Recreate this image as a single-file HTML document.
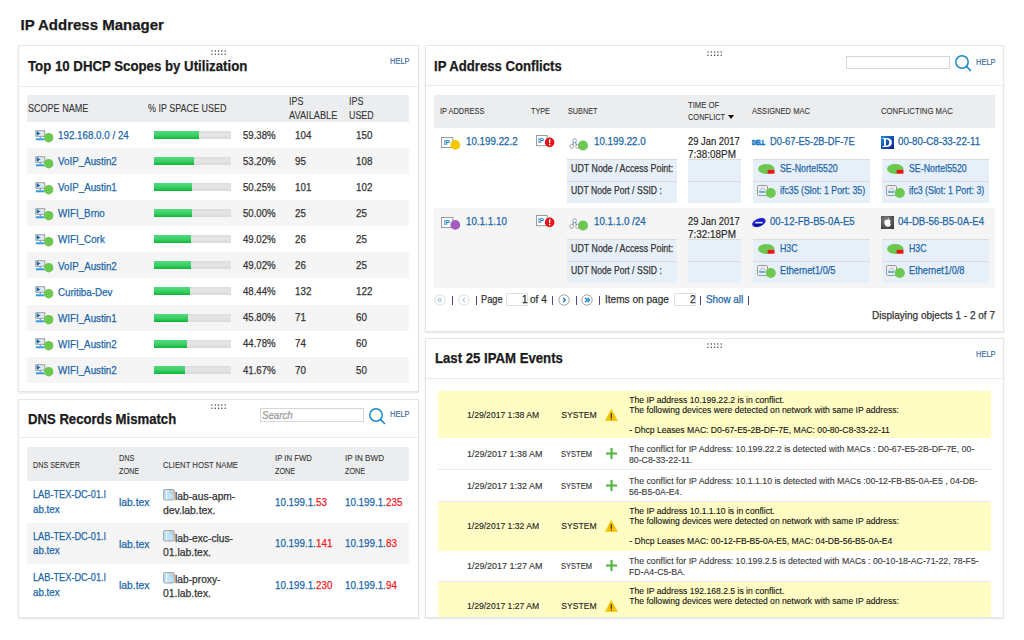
<!DOCTYPE html>
<html><head><meta charset="utf-8"><title>IP Address Manager</title><style>
html,body{margin:0;padding:0;background:#fff;width:1024px;height:640px;overflow:hidden;position:relative}
body{font-family:"Liberation Sans",sans-serif}
.t{position:absolute;white-space:nowrap;transform-origin:0 0;-webkit-text-stroke:0.25px currentColor}
.r{position:absolute;box-sizing:border-box}
.panel{background:#fff;border:1px solid #e6e6e6;box-shadow:0 1px 2px rgba(0,0,0,0.10)}
svg.r{overflow:visible}
</style></head><body>
<div class="t" style="left:20.50px;top:17.45px;font-size:15.00px;line-height:15.00px;color:#1b1b1b;font-weight:bold;">IP Address Manager</div>
<div class="r panel" style="left:18.00px;top:45.00px;width:401.00px;height:347.00px;"></div>
<div class="t" style="left:27.50px;top:58.73px;font-size:14.20px;line-height:14.20px;color:#1b1b1b;font-weight:bold;transform:scaleX(0.9325);">Top 10 DHCP Scopes by Utilization</div>
<svg class="r" style="left:211.10px;top:50.40px" width="16" height="6" viewBox="0 0 16 6"><circle cx="1.00" cy="1.00" r="0.7" fill="#333"/><circle cx="1.00" cy="4.20" r="0.7" fill="#333"/><circle cx="4.30" cy="1.00" r="0.7" fill="#333"/><circle cx="4.30" cy="4.20" r="0.7" fill="#333"/><circle cx="7.60" cy="1.00" r="0.7" fill="#333"/><circle cx="7.60" cy="4.20" r="0.7" fill="#333"/><circle cx="10.90" cy="1.00" r="0.7" fill="#333"/><circle cx="10.90" cy="4.20" r="0.7" fill="#333"/><circle cx="14.20" cy="1.00" r="0.7" fill="#333"/><circle cx="14.20" cy="4.20" r="0.7" fill="#333"/></svg>
<div class="t" style="left:389.80px;top:58.13px;font-size:8.20px;line-height:8.20px;color:#2f6593;transform:scaleX(0.9150);-webkit-text-stroke:0.1px currentColor;">HELP</div>
<div class="r" style="left:19.00px;top:85.50px;width:399.00px;height:1.00px;background:#e9e9e9;"></div>
<div class="r" style="left:27.00px;top:94.80px;width:382.30px;height:27.20px;background:#ebedef;"></div>
<div class="t" style="left:27.60px;top:102.59px;font-size:10.60px;line-height:10.60px;color:#333333;transform:scaleX(0.8531);-webkit-text-stroke:0.08px currentColor;">SCOPE NAME</div>
<div class="t" style="left:147.70px;top:102.59px;font-size:10.60px;line-height:10.60px;color:#333333;transform:scaleX(0.8459);-webkit-text-stroke:0.08px currentColor;">% IP SPACE USED</div>
<div class="t" style="left:289.00px;top:95.99px;font-size:10.60px;line-height:10.60px;color:#333333;transform:scaleX(0.8400);-webkit-text-stroke:0.08px currentColor;">IPS</div>
<div class="t" style="left:289.00px;top:109.59px;font-size:10.60px;line-height:10.60px;color:#333333;transform:scaleX(0.8707);-webkit-text-stroke:0.08px currentColor;">AVAILABLE</div>
<div class="t" style="left:349.20px;top:95.99px;font-size:10.60px;line-height:10.60px;color:#333333;transform:scaleX(0.8400);-webkit-text-stroke:0.08px currentColor;">IPS</div>
<div class="t" style="left:349.20px;top:109.59px;font-size:10.60px;line-height:10.60px;color:#333333;transform:scaleX(0.8400);-webkit-text-stroke:0.08px currentColor;">USED</div>
<svg class="r" style="left:35.00px;top:129.80px" width="11" height="11" viewBox="0 0 11 11"><rect x="0.8" y="0.7" width="9" height="5.6" fill="#dfe6ee" stroke="#8a8f96" stroke-width="0.8"/><rect x="1.6" y="1.6" width="2.2" height="3.6" fill="#1f6aa8"/><rect x="3.6" y="3" width="1.6" height="1" fill="#1f6aa8"/><rect x="4.6" y="6.3" width="1.4" height="2" fill="#5aa6de"/><rect x="0.8" y="8.3" width="8.6" height="2" fill="#3c9ad9"/></svg>
<svg class="r" style="left:42.90px;top:132.10px" width="11.4" height="11.4" viewBox="0 0 11.4 11.4"><circle cx="5.7" cy="5.7" r="4.7" fill="#6cc84e"/></svg>
<div class="t" style="left:57.80px;top:130.35px;font-size:11.00px;line-height:11.00px;color:#1b66a8;transform:scaleX(0.8900);">192.168.0.0 / 24</div>
<div class="r" style="left:154.00px;top:131.30px;width:77.00px;height:8.00px;background:linear-gradient(#dcdcdc,#e6e6e6 40%,#dadada);"></div>
<div class="r" style="left:154.00px;top:131.30px;width:44.72px;height:8.00px;background:linear-gradient(#52da7e,#3fd06a 50%,#0cb632);"></div>
<div class="t" style="left:242.60px;top:130.25px;font-size:11.00px;line-height:11.00px;color:#333333;transform:scaleX(0.8738);">59.38%</div>
<div class="t" style="left:294.60px;top:130.25px;font-size:11.00px;line-height:11.00px;color:#333333;transform:scaleX(0.8900);">104</div>
<div class="t" style="left:355.70px;top:130.25px;font-size:11.00px;line-height:11.00px;color:#333333;transform:scaleX(0.8900);">150</div>
<div class="r" style="left:27.00px;top:148.33px;width:382.30px;height:26.00px;background:#f5f5f5;"></div>
<svg class="r" style="left:35.00px;top:155.83px" width="11" height="11" viewBox="0 0 11 11"><rect x="0.8" y="0.7" width="9" height="5.6" fill="#dfe6ee" stroke="#8a8f96" stroke-width="0.8"/><rect x="1.6" y="1.6" width="2.2" height="3.6" fill="#1f6aa8"/><rect x="3.6" y="3" width="1.6" height="1" fill="#1f6aa8"/><rect x="4.6" y="6.3" width="1.4" height="2" fill="#5aa6de"/><rect x="0.8" y="8.3" width="8.6" height="2" fill="#3c9ad9"/></svg>
<svg class="r" style="left:42.90px;top:158.13px" width="11.4" height="11.4" viewBox="0 0 11.4 11.4"><circle cx="5.7" cy="5.7" r="4.7" fill="#6cc84e"/></svg>
<div class="t" style="left:57.80px;top:156.38px;font-size:11.00px;line-height:11.00px;color:#1b66a8;transform:scaleX(0.8900);">VoIP_Austin2</div>
<div class="r" style="left:154.00px;top:157.33px;width:77.00px;height:8.00px;background:linear-gradient(#dcdcdc,#e6e6e6 40%,#dadada);"></div>
<div class="r" style="left:154.00px;top:157.33px;width:39.96px;height:8.00px;background:linear-gradient(#52da7e,#3fd06a 50%,#0cb632);"></div>
<div class="t" style="left:242.60px;top:156.28px;font-size:11.00px;line-height:11.00px;color:#333333;transform:scaleX(0.8738);">53.20%</div>
<div class="t" style="left:294.60px;top:156.28px;font-size:11.00px;line-height:11.00px;color:#333333;transform:scaleX(0.8900);">95</div>
<div class="t" style="left:355.70px;top:156.28px;font-size:11.00px;line-height:11.00px;color:#333333;transform:scaleX(0.8900);">108</div>
<svg class="r" style="left:35.00px;top:181.86px" width="11" height="11" viewBox="0 0 11 11"><rect x="0.8" y="0.7" width="9" height="5.6" fill="#dfe6ee" stroke="#8a8f96" stroke-width="0.8"/><rect x="1.6" y="1.6" width="2.2" height="3.6" fill="#1f6aa8"/><rect x="3.6" y="3" width="1.6" height="1" fill="#1f6aa8"/><rect x="4.6" y="6.3" width="1.4" height="2" fill="#5aa6de"/><rect x="0.8" y="8.3" width="8.6" height="2" fill="#3c9ad9"/></svg>
<svg class="r" style="left:42.90px;top:184.16px" width="11.4" height="11.4" viewBox="0 0 11.4 11.4"><circle cx="5.7" cy="5.7" r="4.7" fill="#6cc84e"/></svg>
<div class="t" style="left:57.80px;top:182.41px;font-size:11.00px;line-height:11.00px;color:#1b66a8;transform:scaleX(0.8900);">VoIP_Austin1</div>
<div class="r" style="left:154.00px;top:183.36px;width:77.00px;height:8.00px;background:linear-gradient(#dcdcdc,#e6e6e6 40%,#dadada);"></div>
<div class="r" style="left:154.00px;top:183.36px;width:37.69px;height:8.00px;background:linear-gradient(#52da7e,#3fd06a 50%,#0cb632);"></div>
<div class="t" style="left:242.60px;top:182.31px;font-size:11.00px;line-height:11.00px;color:#333333;transform:scaleX(0.8738);">50.25%</div>
<div class="t" style="left:294.60px;top:182.31px;font-size:11.00px;line-height:11.00px;color:#333333;transform:scaleX(0.8900);">101</div>
<div class="t" style="left:355.70px;top:182.31px;font-size:11.00px;line-height:11.00px;color:#333333;transform:scaleX(0.8900);">102</div>
<div class="r" style="left:27.00px;top:200.39px;width:382.30px;height:26.00px;background:#f5f5f5;"></div>
<svg class="r" style="left:35.00px;top:207.89px" width="11" height="11" viewBox="0 0 11 11"><rect x="0.8" y="0.7" width="9" height="5.6" fill="#dfe6ee" stroke="#8a8f96" stroke-width="0.8"/><rect x="1.6" y="1.6" width="2.2" height="3.6" fill="#1f6aa8"/><rect x="3.6" y="3" width="1.6" height="1" fill="#1f6aa8"/><rect x="4.6" y="6.3" width="1.4" height="2" fill="#5aa6de"/><rect x="0.8" y="8.3" width="8.6" height="2" fill="#3c9ad9"/></svg>
<svg class="r" style="left:42.90px;top:210.19px" width="11.4" height="11.4" viewBox="0 0 11.4 11.4"><circle cx="5.7" cy="5.7" r="4.7" fill="#6cc84e"/></svg>
<div class="t" style="left:57.80px;top:208.44px;font-size:11.00px;line-height:11.00px;color:#1b66a8;transform:scaleX(0.8900);">WIFI_Brno</div>
<div class="r" style="left:154.00px;top:209.39px;width:77.00px;height:8.00px;background:linear-gradient(#dcdcdc,#e6e6e6 40%,#dadada);"></div>
<div class="r" style="left:154.00px;top:209.39px;width:37.50px;height:8.00px;background:linear-gradient(#52da7e,#3fd06a 50%,#0cb632);"></div>
<div class="t" style="left:242.60px;top:208.34px;font-size:11.00px;line-height:11.00px;color:#333333;transform:scaleX(0.8738);">50.00%</div>
<div class="t" style="left:294.60px;top:208.34px;font-size:11.00px;line-height:11.00px;color:#333333;transform:scaleX(0.8900);">25</div>
<div class="t" style="left:355.70px;top:208.34px;font-size:11.00px;line-height:11.00px;color:#333333;transform:scaleX(0.8900);">25</div>
<svg class="r" style="left:35.00px;top:233.92px" width="11" height="11" viewBox="0 0 11 11"><rect x="0.8" y="0.7" width="9" height="5.6" fill="#dfe6ee" stroke="#8a8f96" stroke-width="0.8"/><rect x="1.6" y="1.6" width="2.2" height="3.6" fill="#1f6aa8"/><rect x="3.6" y="3" width="1.6" height="1" fill="#1f6aa8"/><rect x="4.6" y="6.3" width="1.4" height="2" fill="#5aa6de"/><rect x="0.8" y="8.3" width="8.6" height="2" fill="#3c9ad9"/></svg>
<svg class="r" style="left:42.90px;top:236.22px" width="11.4" height="11.4" viewBox="0 0 11.4 11.4"><circle cx="5.7" cy="5.7" r="4.7" fill="#6cc84e"/></svg>
<div class="t" style="left:57.80px;top:234.47px;font-size:11.00px;line-height:11.00px;color:#1b66a8;transform:scaleX(0.8900);">WIFI_Cork</div>
<div class="r" style="left:154.00px;top:235.42px;width:77.00px;height:8.00px;background:linear-gradient(#dcdcdc,#e6e6e6 40%,#dadada);"></div>
<div class="r" style="left:154.00px;top:235.42px;width:36.75px;height:8.00px;background:linear-gradient(#52da7e,#3fd06a 50%,#0cb632);"></div>
<div class="t" style="left:242.60px;top:234.37px;font-size:11.00px;line-height:11.00px;color:#333333;transform:scaleX(0.8738);">49.02%</div>
<div class="t" style="left:294.60px;top:234.37px;font-size:11.00px;line-height:11.00px;color:#333333;transform:scaleX(0.8900);">26</div>
<div class="t" style="left:355.70px;top:234.37px;font-size:11.00px;line-height:11.00px;color:#333333;transform:scaleX(0.8900);">25</div>
<div class="r" style="left:27.00px;top:252.45px;width:382.30px;height:26.00px;background:#f5f5f5;"></div>
<svg class="r" style="left:35.00px;top:259.95px" width="11" height="11" viewBox="0 0 11 11"><rect x="0.8" y="0.7" width="9" height="5.6" fill="#dfe6ee" stroke="#8a8f96" stroke-width="0.8"/><rect x="1.6" y="1.6" width="2.2" height="3.6" fill="#1f6aa8"/><rect x="3.6" y="3" width="1.6" height="1" fill="#1f6aa8"/><rect x="4.6" y="6.3" width="1.4" height="2" fill="#5aa6de"/><rect x="0.8" y="8.3" width="8.6" height="2" fill="#3c9ad9"/></svg>
<svg class="r" style="left:42.90px;top:262.25px" width="11.4" height="11.4" viewBox="0 0 11.4 11.4"><circle cx="5.7" cy="5.7" r="4.7" fill="#6cc84e"/></svg>
<div class="t" style="left:57.80px;top:260.50px;font-size:11.00px;line-height:11.00px;color:#1b66a8;transform:scaleX(0.8900);">VoIP_Austin2</div>
<div class="r" style="left:154.00px;top:261.45px;width:77.00px;height:8.00px;background:linear-gradient(#dcdcdc,#e6e6e6 40%,#dadada);"></div>
<div class="r" style="left:154.00px;top:261.45px;width:36.75px;height:8.00px;background:linear-gradient(#52da7e,#3fd06a 50%,#0cb632);"></div>
<div class="t" style="left:242.60px;top:260.40px;font-size:11.00px;line-height:11.00px;color:#333333;transform:scaleX(0.8738);">49.02%</div>
<div class="t" style="left:294.60px;top:260.40px;font-size:11.00px;line-height:11.00px;color:#333333;transform:scaleX(0.8900);">26</div>
<div class="t" style="left:355.70px;top:260.40px;font-size:11.00px;line-height:11.00px;color:#333333;transform:scaleX(0.8900);">25</div>
<svg class="r" style="left:35.00px;top:285.98px" width="11" height="11" viewBox="0 0 11 11"><rect x="0.8" y="0.7" width="9" height="5.6" fill="#dfe6ee" stroke="#8a8f96" stroke-width="0.8"/><rect x="1.6" y="1.6" width="2.2" height="3.6" fill="#1f6aa8"/><rect x="3.6" y="3" width="1.6" height="1" fill="#1f6aa8"/><rect x="4.6" y="6.3" width="1.4" height="2" fill="#5aa6de"/><rect x="0.8" y="8.3" width="8.6" height="2" fill="#3c9ad9"/></svg>
<svg class="r" style="left:42.90px;top:288.28px" width="11.4" height="11.4" viewBox="0 0 11.4 11.4"><circle cx="5.7" cy="5.7" r="4.7" fill="#6cc84e"/></svg>
<div class="t" style="left:57.80px;top:286.53px;font-size:11.00px;line-height:11.00px;color:#1b66a8;transform:scaleX(0.8900);">Curitiba-Dev</div>
<div class="r" style="left:154.00px;top:287.48px;width:77.00px;height:8.00px;background:linear-gradient(#dcdcdc,#e6e6e6 40%,#dadada);"></div>
<div class="r" style="left:154.00px;top:287.48px;width:36.30px;height:8.00px;background:linear-gradient(#52da7e,#3fd06a 50%,#0cb632);"></div>
<div class="t" style="left:242.60px;top:286.43px;font-size:11.00px;line-height:11.00px;color:#333333;transform:scaleX(0.8738);">48.44%</div>
<div class="t" style="left:294.60px;top:286.43px;font-size:11.00px;line-height:11.00px;color:#333333;transform:scaleX(0.8900);">132</div>
<div class="t" style="left:355.70px;top:286.43px;font-size:11.00px;line-height:11.00px;color:#333333;transform:scaleX(0.8900);">122</div>
<div class="r" style="left:27.00px;top:304.51px;width:382.30px;height:26.00px;background:#f5f5f5;"></div>
<svg class="r" style="left:35.00px;top:312.01px" width="11" height="11" viewBox="0 0 11 11"><rect x="0.8" y="0.7" width="9" height="5.6" fill="#dfe6ee" stroke="#8a8f96" stroke-width="0.8"/><rect x="1.6" y="1.6" width="2.2" height="3.6" fill="#1f6aa8"/><rect x="3.6" y="3" width="1.6" height="1" fill="#1f6aa8"/><rect x="4.6" y="6.3" width="1.4" height="2" fill="#5aa6de"/><rect x="0.8" y="8.3" width="8.6" height="2" fill="#3c9ad9"/></svg>
<svg class="r" style="left:42.90px;top:314.31px" width="11.4" height="11.4" viewBox="0 0 11.4 11.4"><circle cx="5.7" cy="5.7" r="4.7" fill="#6cc84e"/></svg>
<div class="t" style="left:57.80px;top:312.56px;font-size:11.00px;line-height:11.00px;color:#1b66a8;transform:scaleX(0.8900);">WIFI_Austin1</div>
<div class="r" style="left:154.00px;top:313.51px;width:77.00px;height:8.00px;background:linear-gradient(#dcdcdc,#e6e6e6 40%,#dadada);"></div>
<div class="r" style="left:154.00px;top:313.51px;width:34.27px;height:8.00px;background:linear-gradient(#52da7e,#3fd06a 50%,#0cb632);"></div>
<div class="t" style="left:242.60px;top:312.46px;font-size:11.00px;line-height:11.00px;color:#333333;transform:scaleX(0.8738);">45.80%</div>
<div class="t" style="left:294.60px;top:312.46px;font-size:11.00px;line-height:11.00px;color:#333333;transform:scaleX(0.8900);">71</div>
<div class="t" style="left:355.70px;top:312.46px;font-size:11.00px;line-height:11.00px;color:#333333;transform:scaleX(0.8900);">60</div>
<svg class="r" style="left:35.00px;top:338.04px" width="11" height="11" viewBox="0 0 11 11"><rect x="0.8" y="0.7" width="9" height="5.6" fill="#dfe6ee" stroke="#8a8f96" stroke-width="0.8"/><rect x="1.6" y="1.6" width="2.2" height="3.6" fill="#1f6aa8"/><rect x="3.6" y="3" width="1.6" height="1" fill="#1f6aa8"/><rect x="4.6" y="6.3" width="1.4" height="2" fill="#5aa6de"/><rect x="0.8" y="8.3" width="8.6" height="2" fill="#3c9ad9"/></svg>
<svg class="r" style="left:42.90px;top:340.34px" width="11.4" height="11.4" viewBox="0 0 11.4 11.4"><circle cx="5.7" cy="5.7" r="4.7" fill="#6cc84e"/></svg>
<div class="t" style="left:57.80px;top:338.59px;font-size:11.00px;line-height:11.00px;color:#1b66a8;transform:scaleX(0.8900);">WIFI_Austin2</div>
<div class="r" style="left:154.00px;top:339.54px;width:77.00px;height:8.00px;background:linear-gradient(#dcdcdc,#e6e6e6 40%,#dadada);"></div>
<div class="r" style="left:154.00px;top:339.54px;width:33.48px;height:8.00px;background:linear-gradient(#52da7e,#3fd06a 50%,#0cb632);"></div>
<div class="t" style="left:242.60px;top:338.49px;font-size:11.00px;line-height:11.00px;color:#333333;transform:scaleX(0.8738);">44.78%</div>
<div class="t" style="left:294.60px;top:338.49px;font-size:11.00px;line-height:11.00px;color:#333333;transform:scaleX(0.8900);">74</div>
<div class="t" style="left:355.70px;top:338.49px;font-size:11.00px;line-height:11.00px;color:#333333;transform:scaleX(0.8900);">60</div>
<div class="r" style="left:27.00px;top:356.57px;width:382.30px;height:26.00px;background:#f5f5f5;"></div>
<svg class="r" style="left:35.00px;top:364.07px" width="11" height="11" viewBox="0 0 11 11"><rect x="0.8" y="0.7" width="9" height="5.6" fill="#dfe6ee" stroke="#8a8f96" stroke-width="0.8"/><rect x="1.6" y="1.6" width="2.2" height="3.6" fill="#1f6aa8"/><rect x="3.6" y="3" width="1.6" height="1" fill="#1f6aa8"/><rect x="4.6" y="6.3" width="1.4" height="2" fill="#5aa6de"/><rect x="0.8" y="8.3" width="8.6" height="2" fill="#3c9ad9"/></svg>
<svg class="r" style="left:42.90px;top:366.37px" width="11.4" height="11.4" viewBox="0 0 11.4 11.4"><circle cx="5.7" cy="5.7" r="4.7" fill="#6cc84e"/></svg>
<div class="t" style="left:57.80px;top:364.62px;font-size:11.00px;line-height:11.00px;color:#1b66a8;transform:scaleX(0.8900);">WIFI_Austin2</div>
<div class="r" style="left:154.00px;top:365.57px;width:77.00px;height:8.00px;background:linear-gradient(#dcdcdc,#e6e6e6 40%,#dadada);"></div>
<div class="r" style="left:154.00px;top:365.57px;width:31.09px;height:8.00px;background:linear-gradient(#52da7e,#3fd06a 50%,#0cb632);"></div>
<div class="t" style="left:242.60px;top:364.52px;font-size:11.00px;line-height:11.00px;color:#333333;transform:scaleX(0.8738);">41.67%</div>
<div class="t" style="left:294.60px;top:364.52px;font-size:11.00px;line-height:11.00px;color:#333333;transform:scaleX(0.8900);">70</div>
<div class="t" style="left:355.70px;top:364.52px;font-size:11.00px;line-height:11.00px;color:#333333;transform:scaleX(0.8900);">50</div>
<div class="r panel" style="left:18.00px;top:399.00px;width:401.00px;height:219.00px;"></div>
<div class="t" style="left:27.80px;top:411.73px;font-size:14.20px;line-height:14.20px;color:#1b1b1b;font-weight:bold;transform:scaleX(0.9258);">DNS Records Mismatch</div>
<svg class="r" style="left:211.10px;top:404.40px" width="16" height="6" viewBox="0 0 16 6"><circle cx="1.00" cy="1.00" r="0.7" fill="#333"/><circle cx="1.00" cy="4.20" r="0.7" fill="#333"/><circle cx="4.30" cy="1.00" r="0.7" fill="#333"/><circle cx="4.30" cy="4.20" r="0.7" fill="#333"/><circle cx="7.60" cy="1.00" r="0.7" fill="#333"/><circle cx="7.60" cy="4.20" r="0.7" fill="#333"/><circle cx="10.90" cy="1.00" r="0.7" fill="#333"/><circle cx="10.90" cy="4.20" r="0.7" fill="#333"/><circle cx="14.20" cy="1.00" r="0.7" fill="#333"/><circle cx="14.20" cy="4.20" r="0.7" fill="#333"/></svg>
<div class="r" style="left:260.3px;top:408.3px;width:104.2px;height:13.3px;border:1px solid #d6d6d6;background:#fff"></div>
<div class="t" style="left:262.00px;top:410.27px;font-size:10.50px;line-height:10.50px;color:#9a9a9a;font-style:italic;transform:scaleX(0.9200);">Search</div>
<svg class="r" style="left:368.20px;top:406.60px" width="18" height="18" viewBox="0 0 18 18"><circle cx="8" cy="8" r="6.2" fill="none" stroke="#1d8ac7" stroke-width="1.5"/><line x1="12.4" y1="12.4" x2="16.5" y2="16.5" stroke="#1d8ac7" stroke-width="1.6" stroke-linecap="round"/></svg>
<div class="t" style="left:390.00px;top:411.03px;font-size:8.20px;line-height:8.20px;color:#2f6593;transform:scaleX(0.9150);-webkit-text-stroke:0.1px currentColor;">HELP</div>
<div class="r" style="left:19.00px;top:437.30px;width:399.00px;height:1.00px;background:#e9e9e9;"></div>
<div class="r" style="left:27.40px;top:446.80px;width:382.10px;height:34.20px;background:#ebedef;"></div>
<div class="t" style="left:33.40px;top:460.70px;font-size:9.30px;line-height:9.30px;color:#333333;transform:scaleX(0.7778);-webkit-text-stroke:0.08px currentColor;">DNS SERVER</div>
<div class="t" style="left:118.60px;top:454.10px;font-size:9.30px;line-height:9.30px;color:#333333;transform:scaleX(0.7800);-webkit-text-stroke:0.08px currentColor;">DNS</div>
<div class="t" style="left:118.60px;top:466.50px;font-size:9.30px;line-height:9.30px;color:#333333;transform:scaleX(0.7800);-webkit-text-stroke:0.08px currentColor;">ZONE</div>
<div class="t" style="left:162.80px;top:460.70px;font-size:9.30px;line-height:9.30px;color:#333333;transform:scaleX(0.8277);-webkit-text-stroke:0.08px currentColor;">CLIENT HOST NAME</div>
<div class="t" style="left:274.80px;top:454.10px;font-size:9.30px;line-height:9.30px;color:#333333;transform:scaleX(0.8337);-webkit-text-stroke:0.08px currentColor;">IP IN FWD</div>
<div class="t" style="left:274.80px;top:466.50px;font-size:9.30px;line-height:9.30px;color:#333333;transform:scaleX(0.7800);-webkit-text-stroke:0.08px currentColor;">ZONE</div>
<div class="t" style="left:344.50px;top:454.10px;font-size:9.30px;line-height:9.30px;color:#333333;transform:scaleX(0.8708);-webkit-text-stroke:0.08px currentColor;">IP IN BWD</div>
<div class="t" style="left:344.50px;top:466.50px;font-size:9.30px;line-height:9.30px;color:#333333;transform:scaleX(0.7800);-webkit-text-stroke:0.08px currentColor;">ZONE</div>
<div class="t" style="left:33.30px;top:489.25px;font-size:11.00px;line-height:11.00px;color:#1b66a8;transform:scaleX(0.8375);">LAB-TEX-DC-01.l</div>
<div class="t" style="left:33.30px;top:503.95px;font-size:11.00px;line-height:11.00px;color:#1b66a8;transform:scaleX(0.8900);">ab.tex</div>
<div class="t" style="left:118.60px;top:497.05px;font-size:11.00px;line-height:11.00px;color:#1b66a8;transform:scaleX(0.9400);">lab.tex</div>
<svg class="r" style="left:163.00px;top:488.60px" width="12" height="12" viewBox="0 0 12 12"><rect x="0.6" y="0.6" width="10.6" height="10.4" rx="1.2" fill="#bfe2f7" stroke="#9a9a9a" stroke-width="0.9"/><rect x="3" y="1.2" width="1.3" height="9.4" fill="#e8f6ff"/><path d="M8 0.6 L11.2 3.8 L8 3.8Z" fill="#fff" stroke="#888" stroke-width="0.5"/></svg>
<div class="t" style="left:175.40px;top:491.25px;font-size:11.00px;line-height:11.00px;color:#333333;transform:scaleX(0.9300);">lab-aus-apm-</div>
<div class="t" style="left:162.80px;top:505.45px;font-size:11.00px;line-height:11.00px;color:#333333;transform:scaleX(0.9450);">dev.lab.tex.</div>
<div class="t" style="left:275.10px;top:496.65px;font-size:11.00px;line-height:11.00px;color:#1b66a8;transform:scaleX(0.8900);">10.199.1.</div>
<div class="t" style="left:315.93px;top:496.65px;font-size:11.00px;line-height:11.00px;color:#f01820;transform:scaleX(0.8900);">53</div>
<div class="t" style="left:345.00px;top:496.65px;font-size:11.00px;line-height:11.00px;color:#1b66a8;transform:scaleX(0.8900);">10.199.1.</div>
<div class="t" style="left:385.83px;top:496.65px;font-size:11.00px;line-height:11.00px;color:#f01820;transform:scaleX(0.8900);">235</div>
<div class="r" style="left:27.40px;top:522.50px;width:382.10px;height:41.50px;background:#f5f5f5;"></div>
<div class="t" style="left:33.30px;top:530.75px;font-size:11.00px;line-height:11.00px;color:#1b66a8;transform:scaleX(0.8375);">LAB-TEX-DC-01.l</div>
<div class="t" style="left:33.30px;top:545.45px;font-size:11.00px;line-height:11.00px;color:#1b66a8;transform:scaleX(0.8900);">ab.tex</div>
<div class="t" style="left:118.60px;top:538.55px;font-size:11.00px;line-height:11.00px;color:#1b66a8;transform:scaleX(0.9400);">lab.tex</div>
<svg class="r" style="left:163.00px;top:530.10px" width="12" height="12" viewBox="0 0 12 12"><rect x="0.6" y="0.6" width="10.6" height="10.4" rx="1.2" fill="#bfe2f7" stroke="#9a9a9a" stroke-width="0.9"/><rect x="3" y="1.2" width="1.3" height="9.4" fill="#e8f6ff"/><path d="M8 0.6 L11.2 3.8 L8 3.8Z" fill="#fff" stroke="#888" stroke-width="0.5"/></svg>
<div class="t" style="left:175.40px;top:532.75px;font-size:11.00px;line-height:11.00px;color:#333333;transform:scaleX(0.9300);">lab-exc-clus-</div>
<div class="t" style="left:162.80px;top:546.95px;font-size:11.00px;line-height:11.00px;color:#333333;transform:scaleX(0.9450);">01.lab.tex.</div>
<div class="t" style="left:275.10px;top:538.15px;font-size:11.00px;line-height:11.00px;color:#1b66a8;transform:scaleX(0.8900);">10.199.1.</div>
<div class="t" style="left:315.93px;top:538.15px;font-size:11.00px;line-height:11.00px;color:#f01820;transform:scaleX(0.8900);">141</div>
<div class="t" style="left:345.00px;top:538.15px;font-size:11.00px;line-height:11.00px;color:#1b66a8;transform:scaleX(0.8900);">10.199.1.</div>
<div class="t" style="left:385.83px;top:538.15px;font-size:11.00px;line-height:11.00px;color:#f01820;transform:scaleX(0.8900);">83</div>
<div class="t" style="left:33.30px;top:572.25px;font-size:11.00px;line-height:11.00px;color:#1b66a8;transform:scaleX(0.8375);">LAB-TEX-DC-01.l</div>
<div class="t" style="left:33.30px;top:586.95px;font-size:11.00px;line-height:11.00px;color:#1b66a8;transform:scaleX(0.8900);">ab.tex</div>
<div class="t" style="left:118.60px;top:580.05px;font-size:11.00px;line-height:11.00px;color:#1b66a8;transform:scaleX(0.9400);">lab.tex</div>
<svg class="r" style="left:163.00px;top:571.60px" width="12" height="12" viewBox="0 0 12 12"><rect x="0.6" y="0.6" width="10.6" height="10.4" rx="1.2" fill="#bfe2f7" stroke="#9a9a9a" stroke-width="0.9"/><rect x="3" y="1.2" width="1.3" height="9.4" fill="#e8f6ff"/><path d="M8 0.6 L11.2 3.8 L8 3.8Z" fill="#fff" stroke="#888" stroke-width="0.5"/></svg>
<div class="t" style="left:175.40px;top:574.25px;font-size:11.00px;line-height:11.00px;color:#333333;transform:scaleX(0.9300);">lab-proxy-</div>
<div class="t" style="left:162.80px;top:588.45px;font-size:11.00px;line-height:11.00px;color:#333333;transform:scaleX(0.9450);">01.lab.tex.</div>
<div class="t" style="left:275.10px;top:579.65px;font-size:11.00px;line-height:11.00px;color:#1b66a8;transform:scaleX(0.8900);">10.199.1.</div>
<div class="t" style="left:315.93px;top:579.65px;font-size:11.00px;line-height:11.00px;color:#f01820;transform:scaleX(0.8900);">230</div>
<div class="t" style="left:345.00px;top:579.65px;font-size:11.00px;line-height:11.00px;color:#1b66a8;transform:scaleX(0.8900);">10.199.1.</div>
<div class="t" style="left:385.83px;top:579.65px;font-size:11.00px;line-height:11.00px;color:#f01820;transform:scaleX(0.8900);">94</div>
<div class="r panel" style="left:425.00px;top:45.00px;width:579.00px;height:286.50px;"></div>
<div class="t" style="left:434.40px;top:58.83px;font-size:14.20px;line-height:14.20px;color:#1b1b1b;font-weight:bold;transform:scaleX(0.9255);">IP Address Conflicts</div>
<svg class="r" style="left:706.90px;top:50.80px" width="16" height="6" viewBox="0 0 16 6"><circle cx="1.00" cy="1.00" r="0.7" fill="#333"/><circle cx="1.00" cy="4.20" r="0.7" fill="#333"/><circle cx="4.30" cy="1.00" r="0.7" fill="#333"/><circle cx="4.30" cy="4.20" r="0.7" fill="#333"/><circle cx="7.60" cy="1.00" r="0.7" fill="#333"/><circle cx="7.60" cy="4.20" r="0.7" fill="#333"/><circle cx="10.90" cy="1.00" r="0.7" fill="#333"/><circle cx="10.90" cy="4.20" r="0.7" fill="#333"/><circle cx="14.20" cy="1.00" r="0.7" fill="#333"/><circle cx="14.20" cy="4.20" r="0.7" fill="#333"/></svg>
<div class="r" style="left:846.2px;top:55.5px;width:103.9px;height:13px;border:1px solid #d6d6d6;background:#fff"></div>
<svg class="r" style="left:954.40px;top:54.40px" width="18" height="18" viewBox="0 0 18 18"><circle cx="8" cy="8" r="6.2" fill="none" stroke="#1d8ac7" stroke-width="1.5"/><line x1="12.4" y1="12.4" x2="16.5" y2="16.5" stroke="#1d8ac7" stroke-width="1.6" stroke-linecap="round"/></svg>
<div class="t" style="left:975.80px;top:58.73px;font-size:8.20px;line-height:8.20px;color:#2f6593;transform:scaleX(0.9150);-webkit-text-stroke:0.1px currentColor;">HELP</div>
<div class="r" style="left:426.00px;top:85.20px;width:577.00px;height:1.00px;background:#e9e9e9;"></div>
<div class="r" style="left:433.90px;top:94.90px;width:561.00px;height:33.10px;background:#ebedef;"></div>
<div class="t" style="left:439.80px;top:107.09px;font-size:9.30px;line-height:9.30px;color:#333333;transform:scaleX(0.7996);-webkit-text-stroke:0.08px currentColor;">IP ADDRESS</div>
<div class="t" style="left:530.60px;top:107.09px;font-size:9.30px;line-height:9.30px;color:#333333;transform:scaleX(0.7800);-webkit-text-stroke:0.08px currentColor;">TYPE</div>
<div class="t" style="left:567.70px;top:107.09px;font-size:9.30px;line-height:9.30px;color:#333333;transform:scaleX(0.7800);-webkit-text-stroke:0.08px currentColor;">SUBNET</div>
<div class="t" style="left:688.40px;top:101.19px;font-size:9.30px;line-height:9.30px;color:#333333;transform:scaleX(0.8273);-webkit-text-stroke:0.08px currentColor;">TIME OF</div>
<div class="t" style="left:688.40px;top:112.80px;font-size:9.30px;line-height:9.30px;color:#333333;transform:scaleX(0.7978);-webkit-text-stroke:0.08px currentColor;">CONFLICT</div>
<svg class="r" style="left:728.40px;top:114.60px" width="6" height="4" viewBox="0 0 6 4"><path d="M0 0 L6 0 L3 4Z" fill="#111"/></svg>
<div class="t" style="left:752.40px;top:107.09px;font-size:9.30px;line-height:9.30px;color:#333333;transform:scaleX(0.8133);-webkit-text-stroke:0.08px currentColor;">ASSIGNED MAC</div>
<div class="t" style="left:881.10px;top:107.09px;font-size:9.30px;line-height:9.30px;color:#333333;transform:scaleX(0.8321);-webkit-text-stroke:0.08px currentColor;">CONFLICTING MAC</div>
<svg class="r" style="left:440.70px;top:137.10px" width="17" height="14" viewBox="0 0 17 14"><rect x="0.5" y="0.5" width="11.3" height="10" fill="#fff" stroke="#9a9a9a" stroke-width="1"/><text x="2.8" y="7.9" font-family="Liberation Sans" font-weight="bold" font-size="6.6" fill="#1a86c8" textLength="6.2" lengthAdjust="spacingAndGlyphs">IP</text><circle cx="14.3" cy="7.9" r="4.9" fill="#f5c700"/></svg>
<div class="t" style="left:466.10px;top:135.75px;font-size:11.00px;line-height:11.00px;color:#1b66a8;transform:scaleX(0.8900);">10.199.22.2</div>
<svg class="r" style="left:536.10px;top:135.40px" width="17" height="14" viewBox="0 0 17 14"><rect x="0.5" y="0.5" width="10.6" height="10.2" fill="#fff" stroke="#9a9a9a" stroke-width="1"/><text x="2.0" y="8.0" font-family="Liberation Sans" font-weight="bold" font-size="6.4" fill="#1a86c8">IP</text><circle cx="13.6" cy="7.4" r="4.8" fill="#e3131b"/><rect x="13" y="4.2" width="1.3" height="4" fill="#fff"/><rect x="13" y="9" width="1.3" height="1.3" fill="#fff"/></svg>
<svg class="r" style="left:569.00px;top:137.50px" width="20" height="13" viewBox="0 0 20 13"><line x1="5.5" y1="2.5" x2="3" y2="8.4" stroke="#4aa7e0" stroke-width="1.2"/><line x1="5.5" y1="2.5" x2="8.5" y2="8.4" stroke="#4aa7e0" stroke-width="1.2"/><circle cx="5.5" cy="2.6" r="1.9" fill="#fff" stroke="#999" stroke-width="0.9"/><circle cx="2.6" cy="8.4" r="1.9" fill="#fff" stroke="#999" stroke-width="0.9"/><circle cx="8.6" cy="8.4" r="1.9" fill="#fff" stroke="#999" stroke-width="0.9"/><circle cx="14" cy="7.5" r="5" fill="#6cc84e"/></svg>
<div class="t" style="left:594.30px;top:135.75px;font-size:11.00px;line-height:11.00px;color:#1b66a8;transform:scaleX(0.8900);">10.199.22.0</div>
<div class="t" style="left:688.40px;top:136.25px;font-size:11.00px;line-height:11.00px;color:#222;transform:scaleX(0.8538);-webkit-text-stroke:0.15px currentColor;">29 Jan 2017</div>
<div class="t" style="left:688.40px;top:148.85px;font-size:11.00px;line-height:11.00px;color:#222;transform:scaleX(0.9000);-webkit-text-stroke:0.15px currentColor;">7:38:08PM</div>
<div class="r" style="left:567.40px;top:158.60px;width:109.40px;height:44.10px;background:#e7f0f8;"></div>
<div class="r" style="left:567.40px;top:158.60px;width:109.40px;height:1.00px;background:#d9dde2;"></div>
<div class="r" style="left:567.40px;top:181.00px;width:109.40px;height:1.00px;background:#d9dde2;"></div>
<div class="r" style="left:687.90px;top:158.60px;width:53.40px;height:44.10px;background:#e7f0f8;"></div>
<div class="r" style="left:687.90px;top:158.60px;width:53.40px;height:1.00px;background:#d9dde2;"></div>
<div class="r" style="left:687.90px;top:181.00px;width:53.40px;height:1.00px;background:#d9dde2;"></div>
<div class="r" style="left:752.50px;top:158.60px;width:117.00px;height:44.10px;background:#e7f0f8;"></div>
<div class="r" style="left:752.50px;top:158.60px;width:117.00px;height:1.00px;background:#d9dde2;"></div>
<div class="r" style="left:752.50px;top:181.00px;width:117.00px;height:1.00px;background:#d9dde2;"></div>
<div class="r" style="left:881.50px;top:158.60px;width:107.50px;height:44.10px;background:#e7f0f8;"></div>
<div class="r" style="left:881.50px;top:158.60px;width:107.50px;height:1.00px;background:#d9dde2;"></div>
<div class="r" style="left:881.50px;top:181.00px;width:107.50px;height:1.00px;background:#d9dde2;"></div>
<div class="t" style="left:570.70px;top:162.55px;font-size:11.00px;line-height:11.00px;color:#333333;transform:scaleX(0.8050);">UDT Node / Access Point:</div>
<div class="t" style="left:570.70px;top:184.65px;font-size:11.00px;line-height:11.00px;color:#333333;transform:scaleX(0.7831);">UDT Node Port / SSID :</div>
<svg class="r" style="left:752.30px;top:136.00px" width="14" height="10" viewBox="0 0 14 10"><text x="0" y="8.8" font-family="Liberation Sans" font-weight="bold" font-size="6.4" fill="#0f76c0" stroke="#0f76c0" stroke-width="0.6" textLength="13.2" lengthAdjust="spacingAndGlyphs">DELL</text></svg>
<svg class="r" style="left:881.00px;top:136.00px" width="14" height="14" viewBox="0 0 14 14"><defs><linearGradient id="dl" x1="0" y1="0" x2="1" y2="1"><stop offset="0" stop-color="#1e8ed6"/><stop offset="1" stop-color="#0a1a8c"/></linearGradient></defs><rect x="0" y="0" width="13" height="13" fill="url(#dl)"/><path d="M1.6 2.0 H6.4 C12.4 2.0 12.4 11.0 6.4 11.0 H1.6 V10.0 H3.0 V3.0 H1.6Z M4.9 3.3 V9.7 C9.4 9.7 9.4 3.3 4.9 3.3Z" fill="#fff" fill-rule="evenodd"/></svg>
<div class="t" style="left:769.90px;top:135.65px;font-size:11.00px;line-height:11.00px;color:#1b66a8;transform:scaleX(0.8500);">D0-67-E5-2B-DF-7E</div>
<div class="t" style="left:898.10px;top:135.65px;font-size:11.00px;line-height:11.00px;color:#1b66a8;transform:scaleX(0.8863);">00-80-C8-33-22-11</div>
<svg class="r" style="left:758.40px;top:164.40px" width="18" height="11" viewBox="0 0 18 11"><ellipse cx="8.3" cy="5" rx="8.2" ry="5" fill="#6cc84e"/><rect x="9.6" y="5.9" width="6.9" height="3.8" fill="#e8141c"/></svg>
<svg class="r" style="left:887.30px;top:164.40px" width="18" height="11" viewBox="0 0 18 11"><ellipse cx="8.3" cy="5" rx="8.2" ry="5" fill="#6cc84e"/><rect x="9.6" y="5.9" width="6.9" height="3.8" fill="#e8141c"/></svg>
<div class="t" style="left:779.90px;top:162.95px;font-size:11.00px;line-height:11.00px;color:#1b66a8;transform:scaleX(0.7997);">SE-Nortel5520</div>
<div class="t" style="left:908.80px;top:162.95px;font-size:11.00px;line-height:11.00px;color:#1b66a8;transform:scaleX(0.7997);">SE-Nortel5520</div>
<svg class="r" style="left:757.10px;top:185.30px" width="20" height="14" viewBox="0 0 20 14"><rect x="0.5" y="0.5" width="10" height="10" rx="1" fill="#eee" stroke="#9a9a9a" stroke-width="1"/><path d="M2.5 6 L5.5 2.5 L8.5 6" fill="none" stroke="#aaa" stroke-width="0.8"/><rect x="2.2" y="6" width="6" height="2" fill="#5ab0e8"/><circle cx="13.8" cy="8" r="5" fill="#6cc84e"/></svg>
<svg class="r" style="left:886.40px;top:185.30px" width="20" height="14" viewBox="0 0 20 14"><rect x="0.5" y="0.5" width="10" height="10" rx="1" fill="#eee" stroke="#9a9a9a" stroke-width="1"/><path d="M2.5 6 L5.5 2.5 L8.5 6" fill="none" stroke="#aaa" stroke-width="0.8"/><rect x="2.2" y="6" width="6" height="2" fill="#5ab0e8"/><circle cx="13.8" cy="8" r="5" fill="#6cc84e"/></svg>
<div class="t" style="left:779.90px;top:184.85px;font-size:11.00px;line-height:11.00px;color:#1b66a8;transform:scaleX(0.7999);">ifc35 (Slot: 1 Port: 35)</div>
<div class="t" style="left:908.80px;top:184.85px;font-size:11.00px;line-height:11.00px;color:#1b66a8;transform:scaleX(0.7988);">ifc3 (Slot: 1 Port: 3)</div>
<div class="r" style="left:433.90px;top:208.00px;width:561.00px;height:80.00px;background:#f5f5f5;"></div>
<svg class="r" style="left:440.70px;top:217.10px" width="17" height="14" viewBox="0 0 17 14"><rect x="0.5" y="0.5" width="11.3" height="10" fill="#fff" stroke="#9a9a9a" stroke-width="1"/><text x="2.8" y="7.9" font-family="Liberation Sans" font-weight="bold" font-size="6.6" fill="#1a86c8" textLength="6.2" lengthAdjust="spacingAndGlyphs">IP</text><circle cx="14.3" cy="7.9" r="4.9" fill="#a25cc1"/></svg>
<div class="t" style="left:466.10px;top:215.75px;font-size:11.00px;line-height:11.00px;color:#1b66a8;transform:scaleX(0.8900);">10.1.1.10</div>
<svg class="r" style="left:536.10px;top:215.40px" width="17" height="14" viewBox="0 0 17 14"><rect x="0.5" y="0.5" width="10.6" height="10.2" fill="#fff" stroke="#9a9a9a" stroke-width="1"/><text x="2.0" y="8.0" font-family="Liberation Sans" font-weight="bold" font-size="6.4" fill="#1a86c8">IP</text><circle cx="13.6" cy="7.4" r="4.8" fill="#e3131b"/><rect x="13" y="4.2" width="1.3" height="4" fill="#fff"/><rect x="13" y="9" width="1.3" height="1.3" fill="#fff"/></svg>
<svg class="r" style="left:569.00px;top:217.50px" width="20" height="13" viewBox="0 0 20 13"><line x1="5.5" y1="2.5" x2="3" y2="8.4" stroke="#4aa7e0" stroke-width="1.2"/><line x1="5.5" y1="2.5" x2="8.5" y2="8.4" stroke="#4aa7e0" stroke-width="1.2"/><circle cx="5.5" cy="2.6" r="1.9" fill="#fff" stroke="#999" stroke-width="0.9"/><circle cx="2.6" cy="8.4" r="1.9" fill="#fff" stroke="#999" stroke-width="0.9"/><circle cx="8.6" cy="8.4" r="1.9" fill="#fff" stroke="#999" stroke-width="0.9"/><circle cx="14" cy="7.5" r="5" fill="#6cc84e"/></svg>
<div class="t" style="left:594.30px;top:215.75px;font-size:11.00px;line-height:11.00px;color:#1b66a8;transform:scaleX(0.8900);">10.1.1.0 /24</div>
<div class="t" style="left:688.40px;top:216.25px;font-size:11.00px;line-height:11.00px;color:#222;transform:scaleX(0.8538);-webkit-text-stroke:0.15px currentColor;">29 Jan 2017</div>
<div class="t" style="left:688.40px;top:228.85px;font-size:11.00px;line-height:11.00px;color:#222;transform:scaleX(0.9000);-webkit-text-stroke:0.15px currentColor;">7:32:18PM</div>
<div class="r" style="left:567.40px;top:238.60px;width:109.40px;height:44.10px;background:#e7f0f8;"></div>
<div class="r" style="left:567.40px;top:238.60px;width:109.40px;height:1.00px;background:#d9dde2;"></div>
<div class="r" style="left:567.40px;top:261.00px;width:109.40px;height:1.00px;background:#d9dde2;"></div>
<div class="r" style="left:687.90px;top:238.60px;width:53.40px;height:44.10px;background:#e7f0f8;"></div>
<div class="r" style="left:687.90px;top:238.60px;width:53.40px;height:1.00px;background:#d9dde2;"></div>
<div class="r" style="left:687.90px;top:261.00px;width:53.40px;height:1.00px;background:#d9dde2;"></div>
<div class="r" style="left:752.50px;top:238.60px;width:117.00px;height:44.10px;background:#e7f0f8;"></div>
<div class="r" style="left:752.50px;top:238.60px;width:117.00px;height:1.00px;background:#d9dde2;"></div>
<div class="r" style="left:752.50px;top:261.00px;width:117.00px;height:1.00px;background:#d9dde2;"></div>
<div class="r" style="left:881.50px;top:238.60px;width:107.50px;height:44.10px;background:#e7f0f8;"></div>
<div class="r" style="left:881.50px;top:238.60px;width:107.50px;height:1.00px;background:#d9dde2;"></div>
<div class="r" style="left:881.50px;top:261.00px;width:107.50px;height:1.00px;background:#d9dde2;"></div>
<div class="t" style="left:570.70px;top:242.55px;font-size:11.00px;line-height:11.00px;color:#333333;transform:scaleX(0.8050);">UDT Node / Access Point:</div>
<div class="t" style="left:570.70px;top:264.65px;font-size:11.00px;line-height:11.00px;color:#333333;transform:scaleX(0.7831);">UDT Node Port / SSID :</div>
<svg class="r" style="left:752.30px;top:217.00px" width="14" height="12" viewBox="0 0 14 12"><ellipse cx="6.9" cy="5.6" rx="7.0" ry="4.0" transform="rotate(-22 6.9 5.6)" fill="#1a1fcf"/><path d="M2.6 7.6 Q6 9.4 10.6 6.6" fill="none" stroke="#0a0a60" stroke-width="1.2"/><rect x="3.2" y="4.9" width="7.4" height="1.5" fill="#e6e8ff"/></svg>
<svg class="r" style="left:881.00px;top:216.00px" width="14" height="14" viewBox="0 0 14 14"><defs><radialGradient id="ap" cx="0.4" cy="0.35" r="0.8"><stop offset="0" stop-color="#8a8a8a"/><stop offset="1" stop-color="#333"/></radialGradient></defs><rect x="0" y="0" width="13" height="13" fill="url(#ap)"/><path d="M6.6 4.2 C5.2 3.3 3.4 4.0 3.4 6.6 C3.4 9.0 5.0 11.2 6.6 10.6 C8.2 11.2 9.8 9.2 10.0 8.2 C8.6 7.6 8.6 5.2 9.8 4.7 C9.0 3.6 7.6 3.6 6.6 4.2Z M6.6 3.8 C6.6 2.8 7.4 2 8.2 1.8 C8.2 2.8 7.4 3.6 6.6 3.8Z" fill="#fff"/></svg>
<div class="t" style="left:769.90px;top:215.65px;font-size:11.00px;line-height:11.00px;color:#1b66a8;transform:scaleX(0.8713);">00-12-FB-B5-0A-E5</div>
<div class="t" style="left:898.10px;top:215.65px;font-size:11.00px;line-height:11.00px;color:#1b66a8;transform:scaleX(0.8737);">04-DB-56-B5-0A-E4</div>
<svg class="r" style="left:758.40px;top:244.40px" width="18" height="11" viewBox="0 0 18 11"><ellipse cx="8.3" cy="5" rx="8.2" ry="5" fill="#6cc84e"/><rect x="9.6" y="5.9" width="6.9" height="3.8" fill="#e8141c"/></svg>
<svg class="r" style="left:887.30px;top:244.40px" width="18" height="11" viewBox="0 0 18 11"><ellipse cx="8.3" cy="5" rx="8.2" ry="5" fill="#6cc84e"/><rect x="9.6" y="5.9" width="6.9" height="3.8" fill="#e8141c"/></svg>
<div class="t" style="left:779.90px;top:242.95px;font-size:11.00px;line-height:11.00px;color:#1b66a8;transform:scaleX(0.7997);">H3C</div>
<div class="t" style="left:908.80px;top:242.95px;font-size:11.00px;line-height:11.00px;color:#1b66a8;transform:scaleX(0.7997);">H3C</div>
<svg class="r" style="left:757.10px;top:265.30px" width="20" height="14" viewBox="0 0 20 14"><rect x="0.5" y="0.5" width="10" height="10" rx="1" fill="#eee" stroke="#9a9a9a" stroke-width="1"/><path d="M2.5 6 L5.5 2.5 L8.5 6" fill="none" stroke="#aaa" stroke-width="0.8"/><rect x="2.2" y="6" width="6" height="2" fill="#5ab0e8"/><circle cx="13.8" cy="8" r="5" fill="#6cc84e"/></svg>
<svg class="r" style="left:886.40px;top:265.30px" width="20" height="14" viewBox="0 0 20 14"><rect x="0.5" y="0.5" width="10" height="10" rx="1" fill="#eee" stroke="#9a9a9a" stroke-width="1"/><path d="M2.5 6 L5.5 2.5 L8.5 6" fill="none" stroke="#aaa" stroke-width="0.8"/><rect x="2.2" y="6" width="6" height="2" fill="#5ab0e8"/><circle cx="13.8" cy="8" r="5" fill="#6cc84e"/></svg>
<div class="t" style="left:779.90px;top:264.85px;font-size:11.00px;line-height:11.00px;color:#1b66a8;transform:scaleX(0.8403);">Ethernet1/0/5</div>
<div class="t" style="left:908.80px;top:264.85px;font-size:11.00px;line-height:11.00px;color:#1b66a8;transform:scaleX(0.8403);">Ethernet1/0/8</div>
<svg class="r" style="left:433.80px;top:294.00px" width="12" height="12" viewBox="0 0 12 12"><circle cx="6" cy="6" r="5.2" fill="#fff" stroke="#d9d9d9" stroke-width="0.9"/><path d="M5.6 3.8 L3.8 6 L5.6 8.2 M7.8 3.8 L6 6 L7.8 8.2" fill="none" stroke="#a9cce6" stroke-width="1.1"/></svg>
<div class="r" style="left:451.50px;top:295.60px;width:1.20px;height:9.60px;background:#4a4a8a;"></div>
<svg class="r" style="left:457.60px;top:294.00px" width="12" height="12" viewBox="0 0 12 12"><circle cx="6" cy="6" r="5.2" fill="#fff" stroke="#d9d9d9" stroke-width="0.9"/><path d="M6.8 3.8 L5 6 L6.8 8.2" fill="none" stroke="#a9cce6" stroke-width="1.1"/></svg>
<div class="r" style="left:475.50px;top:295.60px;width:1.20px;height:9.60px;background:#4a4a8a;"></div>
<div class="t" style="left:481.20px;top:293.65px;font-size:11.00px;line-height:11.00px;color:#333333;transform:scaleX(0.8369);">Page</div>
<div class="r" style="left:505.9px;top:292.6px;width:21.7px;height:13.2px;border:1px solid #dedede;border-radius:1px;background:#fff"></div>
<div class="t" style="left:521.60px;top:293.65px;font-size:11.00px;line-height:11.00px;color:#222;transform:scaleX(0.9000);">1</div>
<div class="t" style="left:530.00px;top:293.65px;font-size:11.00px;line-height:11.00px;color:#333333;transform:scaleX(0.9156);">of 4</div>
<div class="r" style="left:552.10px;top:295.60px;width:1.20px;height:9.60px;background:#4a4a8a;"></div>
<svg class="r" style="left:557.80px;top:294.00px" width="12" height="12" viewBox="0 0 12 12"><circle cx="6" cy="6" r="5.2" fill="#fff" stroke="#9a9a9a" stroke-width="0.9"/><path d="M5.2 3.7 L7.1 6 L5.2 8.3" fill="none" stroke="#1a86c8" stroke-width="1.5"/></svg>
<div class="r" style="left:575.60px;top:295.60px;width:1.20px;height:9.60px;background:#4a4a8a;"></div>
<svg class="r" style="left:581.40px;top:294.00px" width="12" height="12" viewBox="0 0 12 12"><circle cx="6" cy="6" r="5.2" fill="#fff" stroke="#9a9a9a" stroke-width="0.9"/><path d="M4.2 3.7 L6.1 6 L4.2 8.3 M6.6 3.7 L8.5 6 L6.6 8.3" fill="none" stroke="#1a86c8" stroke-width="1.4"/></svg>
<div class="r" style="left:599.20px;top:295.60px;width:1.20px;height:9.60px;background:#4a4a8a;"></div>
<div class="t" style="left:604.90px;top:293.65px;font-size:11.00px;line-height:11.00px;color:#333333;transform:scaleX(0.9166);">Items on page</div>
<div class="r" style="left:673.8px;top:292.6px;width:21.9px;height:13.2px;border:1px solid #dedede;border-radius:1px;background:#fff"></div>
<div class="t" style="left:689.60px;top:293.65px;font-size:11.00px;line-height:11.00px;color:#333333;transform:scaleX(0.9000);">2</div>
<div class="r" style="left:700.10px;top:295.60px;width:1.20px;height:9.60px;background:#4a4a8a;"></div>
<div class="t" style="left:706.40px;top:293.65px;font-size:11.00px;line-height:11.00px;color:#1b66a8;transform:scaleX(0.8947);">Show all</div>
<div class="r" style="left:747.90px;top:295.60px;width:1.20px;height:9.60px;background:#4a4a8a;"></div>
<div class="t" style="left:871.70px;top:310.25px;font-size:11.00px;line-height:11.00px;color:#333333;transform:scaleX(0.9102);">Displaying objects 1 - 2 of 7</div>
<div class="r panel" style="left:425.00px;top:338.00px;width:579.00px;height:280.00px;"></div>
<div class="t" style="left:434.60px;top:351.33px;font-size:14.20px;line-height:14.20px;color:#1b1b1b;font-weight:bold;transform:scaleX(0.9286);">Last 25 IPAM Events</div>
<svg class="r" style="left:706.90px;top:343.00px" width="16" height="6" viewBox="0 0 16 6"><circle cx="1.00" cy="1.00" r="0.7" fill="#333"/><circle cx="1.00" cy="4.20" r="0.7" fill="#333"/><circle cx="4.30" cy="1.00" r="0.7" fill="#333"/><circle cx="4.30" cy="4.20" r="0.7" fill="#333"/><circle cx="7.60" cy="1.00" r="0.7" fill="#333"/><circle cx="7.60" cy="4.20" r="0.7" fill="#333"/><circle cx="10.90" cy="1.00" r="0.7" fill="#333"/><circle cx="10.90" cy="4.20" r="0.7" fill="#333"/><circle cx="14.20" cy="1.00" r="0.7" fill="#333"/><circle cx="14.20" cy="4.20" r="0.7" fill="#333"/></svg>
<div class="t" style="left:975.80px;top:351.23px;font-size:8.20px;line-height:8.20px;color:#2f6593;transform:scaleX(0.9150);-webkit-text-stroke:0.1px currentColor;">HELP</div>
<div class="r" style="left:426.00px;top:377.90px;width:577.00px;height:1.00px;background:#e9e9e9;"></div>
<div class="r" style="left:0;top:0;width:1024px;height:617px;overflow:hidden">
<div class="r" style="left:438.00px;top:391.20px;width:553.00px;height:47.10px;background:#fffdc4;"></div>
<div class="t" style="left:467.00px;top:410.54px;font-size:8.60px;line-height:8.60px;color:#222;-webkit-text-stroke:0.12px currentColor;">1/29/2017 1:38 AM</div>
<div class="t" style="left:561.30px;top:410.54px;font-size:8.60px;line-height:8.60px;color:#222;-webkit-text-stroke:0.12px currentColor;">SYSTEM</div>
<svg class="r" style="left:605.30px;top:408.55px" width="13" height="12" viewBox="0 0 13 12"><path d="M6.3 0.6 L12.4 11.6 L0.4 11.6Z" fill="#f3c200" stroke="#f3c200" stroke-width="0.6" stroke-linejoin="round"/><rect x="5.7" y="4.2" width="1.3" height="4.6" fill="#5a3a10"/><rect x="5.7" y="9.6" width="1.3" height="1.2" fill="#5a3a10"/></svg>
<div class="t" style="left:629.20px;top:396.39px;font-size:8.60px;line-height:8.60px;color:#111;-webkit-text-stroke:0.1px currentColor;">The IP address 10.199.22.2 is in conflict.</div>
<div class="t" style="left:629.20px;top:406.19px;font-size:8.60px;line-height:8.60px;color:#111;-webkit-text-stroke:0.1px currentColor;">The following devices were detected on network with same IP address:</div>
<div class="t" style="left:629.20px;top:425.79px;font-size:8.60px;line-height:8.60px;color:#111;-webkit-text-stroke:0.1px currentColor;">- Dhcp Leases MAC: D0-67-E5-2B-DF-7E, MAC: 00-80-C8-33-22-11</div>
<div class="r" style="left:438.00px;top:469.10px;width:553.00px;height:1.00px;background:#e9e9e9;"></div>
<div class="t" style="left:467.00px;top:449.34px;font-size:9.60px;line-height:9.60px;color:#333;transform:scaleX(0.9380);-webkit-text-stroke:0.12px currentColor;">1/29/2017 1:38 AM</div>
<div class="t" style="left:561.30px;top:449.34px;font-size:9.60px;line-height:9.60px;color:#333;transform:scaleX(0.7878);-webkit-text-stroke:0.12px currentColor;">SYSTEM</div>
<svg class="r" style="left:606.00px;top:448.40px" width="11" height="11" viewBox="0 0 11 11"><rect x="4.4" y="0" width="2.2" height="11" fill="#58b947"/><rect x="0" y="4.4" width="11" height="2.2" fill="#58b947"/></svg>
<div class="t" style="left:628.70px;top:443.84px;font-size:9.60px;line-height:9.60px;color:#3a3a3a;transform:scaleX(0.9100);-webkit-text-stroke:0.12px currentColor;">The conflict for IP Address: 10.199.22.2 is detected with MACs : D0-67-E5-2B-DF-7E, 00-</div>
<div class="t" style="left:628.70px;top:455.24px;font-size:9.60px;line-height:9.60px;color:#3a3a3a;transform:scaleX(0.9100);-webkit-text-stroke:0.12px currentColor;">80-C8-33-22-11.</div>
<div class="r" style="left:438.00px;top:501.00px;width:553.00px;height:1.00px;background:#e9e9e9;"></div>
<div class="t" style="left:467.00px;top:481.19px;font-size:9.60px;line-height:9.60px;color:#333;transform:scaleX(0.9380);-webkit-text-stroke:0.12px currentColor;">1/29/2017 1:32 AM</div>
<div class="t" style="left:561.30px;top:481.19px;font-size:9.60px;line-height:9.60px;color:#333;transform:scaleX(0.7878);-webkit-text-stroke:0.12px currentColor;">SYSTEM</div>
<svg class="r" style="left:606.00px;top:480.25px" width="11" height="11" viewBox="0 0 11 11"><rect x="4.4" y="0" width="2.2" height="11" fill="#58b947"/><rect x="0" y="4.4" width="11" height="2.2" fill="#58b947"/></svg>
<div class="t" style="left:628.70px;top:475.64px;font-size:9.60px;line-height:9.60px;color:#3a3a3a;transform:scaleX(0.9100);-webkit-text-stroke:0.12px currentColor;">The conflict for IP Address: 10.1.1.10 is detected with MACs :00-12-FB-B5-0A-E5 , 04-DB-</div>
<div class="t" style="left:628.70px;top:487.04px;font-size:9.60px;line-height:9.60px;color:#3a3a3a;transform:scaleX(0.9100);-webkit-text-stroke:0.12px currentColor;">56-B5-0A-E4.</div>
<div class="r" style="left:438.00px;top:502.00px;width:553.00px;height:48.50px;background:#fffdc4;"></div>
<div class="t" style="left:467.00px;top:522.04px;font-size:8.60px;line-height:8.60px;color:#222;-webkit-text-stroke:0.12px currentColor;">1/29/2017 1:32 AM</div>
<div class="t" style="left:561.30px;top:522.04px;font-size:8.60px;line-height:8.60px;color:#222;-webkit-text-stroke:0.12px currentColor;">SYSTEM</div>
<svg class="r" style="left:605.30px;top:520.05px" width="13" height="12" viewBox="0 0 13 12"><path d="M6.3 0.6 L12.4 11.6 L0.4 11.6Z" fill="#f3c200" stroke="#f3c200" stroke-width="0.6" stroke-linejoin="round"/><rect x="5.7" y="4.2" width="1.3" height="4.6" fill="#5a3a10"/><rect x="5.7" y="9.6" width="1.3" height="1.2" fill="#5a3a10"/></svg>
<div class="t" style="left:629.20px;top:507.19px;font-size:8.60px;line-height:8.60px;color:#111;-webkit-text-stroke:0.1px currentColor;">The IP address 10.1.1.10 is in conflict.</div>
<div class="t" style="left:629.20px;top:516.99px;font-size:8.60px;line-height:8.60px;color:#111;-webkit-text-stroke:0.1px currentColor;">The following devices were detected on network with same IP address:</div>
<div class="t" style="left:629.20px;top:536.59px;font-size:8.60px;line-height:8.60px;color:#111;-webkit-text-stroke:0.1px currentColor;">- Dhcp Leases MAC: 00-12-FB-B5-0A-E5, MAC: 04-DB-56-B5-0A-E4</div>
<div class="r" style="left:438.00px;top:581.00px;width:553.00px;height:1.00px;background:#e9e9e9;"></div>
<div class="t" style="left:467.00px;top:561.39px;font-size:9.60px;line-height:9.60px;color:#333;transform:scaleX(0.9380);-webkit-text-stroke:0.12px currentColor;">1/29/2017 1:27 AM</div>
<div class="t" style="left:561.30px;top:561.39px;font-size:9.60px;line-height:9.60px;color:#333;transform:scaleX(0.7878);-webkit-text-stroke:0.12px currentColor;">SYSTEM</div>
<svg class="r" style="left:606.00px;top:560.45px" width="11" height="11" viewBox="0 0 11 11"><rect x="4.4" y="0" width="2.2" height="11" fill="#58b947"/><rect x="0" y="4.4" width="11" height="2.2" fill="#58b947"/></svg>
<div class="t" style="left:628.70px;top:556.04px;font-size:9.60px;line-height:9.60px;color:#3a3a3a;transform:scaleX(0.9100);-webkit-text-stroke:0.12px currentColor;">The conflict for IP Address: 10.199.2.5 is detected with MACs : 00-10-18-AC-71-22, 78-F5-</div>
<div class="t" style="left:628.70px;top:567.44px;font-size:9.60px;line-height:9.60px;color:#3a3a3a;transform:scaleX(0.9100);-webkit-text-stroke:0.12px currentColor;">FD-A4-C5-BA.</div>
<div class="r" style="left:438.00px;top:582.00px;width:553.00px;height:47.50px;background:#fffdc4;"></div>
<div class="t" style="left:467.00px;top:601.54px;font-size:8.60px;line-height:8.60px;color:#222;-webkit-text-stroke:0.12px currentColor;">1/29/2017 1:27 AM</div>
<div class="t" style="left:561.30px;top:601.54px;font-size:8.60px;line-height:8.60px;color:#222;-webkit-text-stroke:0.12px currentColor;">SYSTEM</div>
<svg class="r" style="left:605.30px;top:599.55px" width="13" height="12" viewBox="0 0 13 12"><path d="M6.3 0.6 L12.4 11.6 L0.4 11.6Z" fill="#f3c200" stroke="#f3c200" stroke-width="0.6" stroke-linejoin="round"/><rect x="5.7" y="4.2" width="1.3" height="4.6" fill="#5a3a10"/><rect x="5.7" y="9.6" width="1.3" height="1.2" fill="#5a3a10"/></svg>
<div class="t" style="left:629.20px;top:587.19px;font-size:8.60px;line-height:8.60px;color:#111;-webkit-text-stroke:0.1px currentColor;">The IP address 192.168.2.5 is in conflict.</div>
<div class="t" style="left:629.20px;top:596.99px;font-size:8.60px;line-height:8.60px;color:#111;-webkit-text-stroke:0.1px currentColor;">The following devices were detected on network with same IP address:</div>
</div>
</body></html>
